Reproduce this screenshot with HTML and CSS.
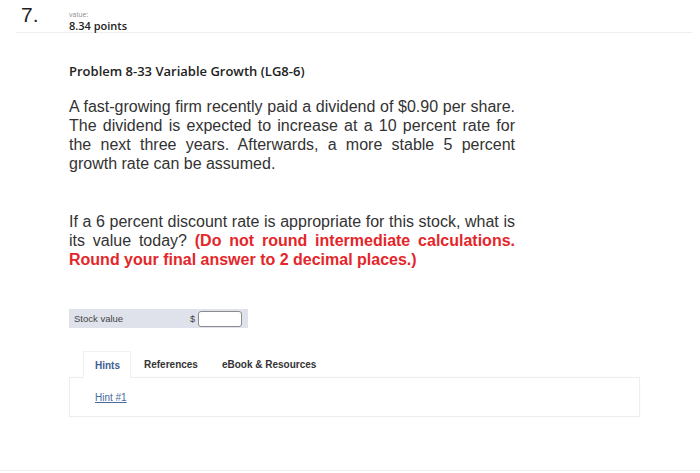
FILE: index.html
```html
<!DOCTYPE html>
<html>
<head>
<meta charset="utf-8">
<link rel="stylesheet" href="styles.css">
</head>
<body>
<div class="page">
  <header class="qhead">
    <div class="qnum">7.</div>
    <div class="meta">
      <div class="meta-label">value:</div>
      <div class="meta-points">8.34 points</div>
    </div>
  </header>
  <main class="content">
    <h2 class="title">Problem 8-33 Variable Growth (LG8-6)</h2>
    <p class="para">A fast-growing firm recently paid a dividend of $0.90 per share. The dividend is expected to increase at a 10 percent rate for the next three years. Afterwards, a more stable 5 percent growth rate can be assumed.</p>
    <p class="para para2">If a 6 percent discount rate is appropriate for this stock, what is its value today? <strong class="warn">(Do not round intermediate calculations. Round your final answer to 2 decimal places.)</strong></p>
    <div class="answer-row">
      <span class="answer-label">Stock value</span>
      <span class="dollar">$</span>
      <span class="answer-input"></span>
    </div>
    <div class="tabs">
      <div class="tab-list">
        <span class="tab active">Hints</span>
        <span class="tab">References</span>
        <span class="tab">eBook &amp; Resources</span>
      </div>
      <div class="tab-panel">
        <a class="hint-link" href="#">Hint #1</a>
      </div>
    </div>
  </main>
  <div class="footer-line"></div>
</div>
</body>
</html>
```

FILE: styles.css
```css
html, body {
  margin: 0;
  padding: 0;
  background: #fff;
}
body {
  font-family: "Liberation Sans", Arial, sans-serif;
  color: #333;
}
.page {
  width: 700px;
  height: 473px;
  position: relative;
  overflow: hidden;
}
.qhead {
  display: flex;
  margin: 0 8px 0 16px;
  height: 32px;
  border-bottom: 1px solid #efefef;
}
.qnum {
  font-family: "Liberation Sans", Arial, sans-serif;
  font-size: 21px;
  color: #222;
  padding: 3px 0 0 5px;
  width: 48px;
  line-height: 24px;
}
.meta {
  display: flex;
  flex-direction: column;
  padding-top: 11px;
}
.meta-label {
  font-family: "Open Sans", sans-serif;
  font-size: 7px;
  line-height: 8px;
  height: 8px;
  color: #8a8a8a;
}
.meta-points {
  font-family: "Open Sans", sans-serif;
  font-weight: 600;
  font-size: 11px;
  line-height: 11px;
  margin-top: 1px;
  color: #222;
}
.content {
  padding-left: 69px;
  padding-top: 29px;
}
.title {
  margin: 0;
  font-family: "Open Sans", sans-serif;
  font-weight: 600;
  font-size: 13px;
  line-height: 18px;
  color: #222;
}
.para {
  width: 446px;
  margin: 17px 0 0 0;
  font-size: 16px;
  line-height: 19px;
  color: #333;
  text-align: justify;
}
.para2 {
  margin-top: 39px;
}
.warn {
  color: #e4262a;
}
.answer-row {
  margin-top: 40px;
  width: 179px;
  height: 19px;
  background: #dfe2eb;
  display: flex;
  align-items: center;
  font-size: 9.5px;
  color: #444;
}
.answer-label {
  padding-left: 5px;
  width: 116px;
}
.dollar {
  width: 8px;
  font-size: 9px;
}
.answer-input {
  width: 42px;
  height: 14px;
  border: 1px solid #8c8c8c;
  border-radius: 3px;
  background: #fff;
}
.tabs {
  margin-top: 23px;
  width: 571px;
}
.tab-list {
  display: flex;
  padding-left: 14px;
  height: 26px;
  align-items: stretch;
}
.tab {
  font-size: 10px;
  font-weight: bold;
  color: #333;
  display: flex;
  align-items: center;
  padding: 1px 0 0 0;
}
.tab.active {
  color: #3e5e92;
  padding: 1px 10px 0 11px;
  border: 1px solid #f0f0f0;
  border-bottom: none;
  background: #fff;
  margin-right: 13px;
  position: relative;
  z-index: 1;
  margin-bottom: -1px;
}
.tab + .tab + .tab {
  margin-left: 24px;
}
.tab-panel {
  border: 1px solid #eeeeee;
  height: 40px;
  padding-left: 25px;
  box-sizing: border-box;
  box-shadow: 0 0 1px #f4f4f4;
}
.hint-link {
  display: inline-block;
  margin-top: 14px;
  font-size: 10px;
  color: #4a6b9d;
  text-decoration: underline;
}
.footer-line {
  position: absolute;
  left: 0;
  right: 0;
  top: 470px;
  border-top: 1px solid #f0f0f0;
}
```
